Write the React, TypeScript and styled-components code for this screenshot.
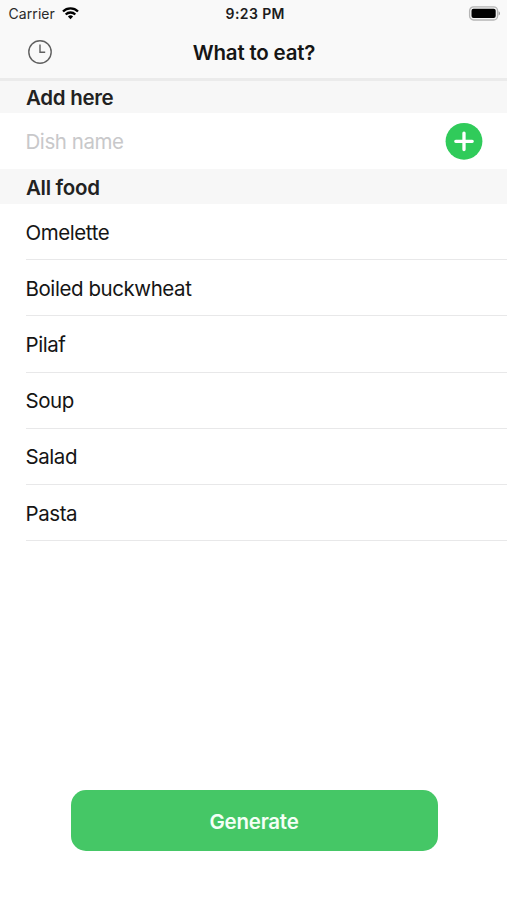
import React, { useState } from "react";
import styled, { createGlobalStyle } from "styled-components";

const GlobalStyle = createGlobalStyle`
  * { box-sizing: border-box; }
  body { margin: 0; background: #fff; }
  button, input { font: inherit; letter-spacing: inherit; border: 0; padding: 0; background: none; }
`;

const Screen = styled.main`
  width: 507px;
  height: 900px;
  display: flex;
  flex-direction: column;
  background: #fff;
  color: #151515;
  font-family: Inter, "Liberation Sans", sans-serif;
  font-size: 20.5px;
  letter-spacing: -0.43px;
  overflow: hidden;
`;

const Header = styled.header`
  height: 81px;
  flex: none;
  background: #f9f9f9;
  border-bottom: 3px solid #ebebeb;
`;

const StatusBar = styled.div`
  height: 27px;
  display: grid;
  grid-template-columns: 1fr auto 1fr;
  align-items: center;
  padding: 0 7px 0 8.5px;
  font-size: 14px;
`;

const Carrier = styled.div`
  display: flex;
  align-items: center;
  gap: 7px;
  color: #2a2a2a;
  letter-spacing: 0.08px;
`;

const Time = styled.time`
  font-weight: 600;
  letter-spacing: 0.4px;
  padding-left: 2px;
  color: #1c1c1c;
`;

const BatteryIcon = styled.svg`
  justify-self: end;
`;

const NavBar = styled.nav`
  height: 51px;
  display: grid;
  grid-template-columns: 1fr auto 1fr;
  align-items: center;
  padding: 0 27px;
`;

const IconButton = styled.button`
  display: flex;
  width: 26px;
  height: 26px;
  margin-bottom: 2px;
`;

const Title = styled.h1`
  margin: 0;
  padding-left: 1px;
  font-size: 20.5px;
  font-weight: 600;
  letter-spacing: -0.2px;
`;

const SectionHeader = styled.h2<{ $height: number; $shift?: number }>`
  height: ${(p) => p.$height}px;
  flex: none;
  margin: 0;
  padding: ${(p) => p.$shift ?? 0}px 0 0 26px;
  display: flex;
  align-items: center;
  background: #f7f7f7;
  color: #222;
  font-size: 20.5px;
  font-weight: 600;
  letter-spacing: -0.3px;
`;

const AddRow = styled.form`
  height: 56px;
  flex: none;
  display: flex;
  align-items: center;
  justify-content: space-between;
  padding: 0 24px 0 25.5px;
`;

const DishInput = styled.input`
  width: 300px;
  outline: none;
  &::placeholder { color: #c8c8ca; opacity: 1; }
`;

const AddButton = styled.button`
  display: flex;
  width: 38px;
  height: 38px;
`;

const FoodList = styled.ul`
  list-style: none;
  margin: 0 0 0 25.5px;
  padding: 0;
`;

const FoodRow = styled.li`
  height: 56.2px;
  display: flex;
  align-items: center;
  padding-top: 1px;
  border-bottom: 1px solid #e8e8e9;
`;

const Footer = styled.footer`
  margin-top: auto;
  padding: 0 69.5px 49px 70.5px;
`;

const GenerateButton = styled.button`
  width: 100%;
  height: 61px;
  padding-top: 2px;
  border-radius: 15px;
  background: #45c766;
  color: #f4fff6;
  font-weight: 600;
  letter-spacing: -0.25px;
`;

const initialFood = ["Omelette", "Boiled buckwheat", "Pilaf", "Soup", "Salad", "Pasta"];

export default function App() {
  const [food, setFood] = useState(initialFood);
  const [name, setName] = useState("");

  const addDish = (event: React.FormEvent) => {
    event.preventDefault();
    if (!name.trim()) return;
    setFood([...food, name.trim()]);
    setName("");
  };

  return (
    <Screen>
      <GlobalStyle />
      <Header>
        <StatusBar>
          <Carrier>
            <span>Carrier</span>
            <svg width="17" height="13" viewBox="0 0 17 13" fill="none" stroke="#000" strokeWidth="2.3">
              <path d="M1 4.5a10.6 10.6 0 0 1 15 0" />
              <path d="M3.7 7.5a6.8 6.8 0 0 1 9.6 0" />
              <path d="M8.5 12.2 5.9 9.6a3.7 3.7 0 0 1 5.2 0Z" fill="#000" stroke="none" />
            </svg>
          </Carrier>
          <Time>9:23 PM</Time>
          <BatteryIcon width="32" height="15" viewBox="0 0 32 15">
            <rect x="1.6" y="0.8" width="28" height="13.2" rx="4" fill="#f3f3f3" stroke="#b5b5b5" strokeWidth="1.3" />
            <rect x="3.5" y="2.8" width="24.2" height="9.2" rx="2" fill="#000" />
            <path d="M30.6 5.3q1.4.6 1.4 2.1t-1.4 2.1Z" fill="#999" />
          </BatteryIcon>
        </StatusBar>
        <NavBar>
          <IconButton aria-label="History">
            <svg width="26" height="26" viewBox="0 0 26 26" fill="none" stroke="#606060" strokeWidth="1.4">
              <circle cx="13" cy="13" r="11.2" />
              <path d="M13 5.5v7.8h5.2" />
            </svg>
          </IconButton>
          <Title>What to eat?</Title>
        </NavBar>
      </Header>
      <SectionHeader $height={32}>Add here</SectionHeader>
      <AddRow onSubmit={addDish}>
        <DishInput placeholder="Dish name" value={name} onChange={(e) => setName(e.target.value)} />
        <AddButton aria-label="Add dish">
          <svg width="38" height="38" viewBox="0 0 38 38">
            <circle cx="19" cy="19.3" r="18.4" fill="#30cb5a" />
            <path d="M19 11.1v16.4M10.8 19.3h16.4" stroke="#fff" strokeWidth="3.3" strokeLinecap="round" />
          </svg>
        </AddButton>
      </AddRow>
      <SectionHeader $height={35} $shift={2}>All food</SectionHeader>
      <FoodList>
        {food.map((dish, i) => (
          <FoodRow key={i}>{dish}</FoodRow>
        ))}
      </FoodList>
      <Footer>
        <GenerateButton>Generate</GenerateButton>
      </Footer>
    </Screen>
  );
}
